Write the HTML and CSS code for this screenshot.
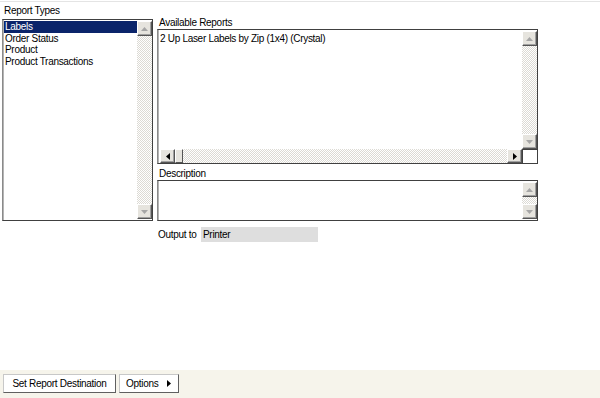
FILE: index.html
```html
<!DOCTYPE html>
<html>
<head>
<meta charset="utf-8">
<link rel="stylesheet" href="styles.css">
</head>
<body>
<div class="page">
  <div class="top-line"></div>
  <div class="main">
    <div class="left-col">
      <div class="label lbl-types">Report Types</div>
      <div class="box list-box">
        <div class="list-items">
          <div class="item selected">Labels</div>
          <div class="item">Order Status</div>
          <div class="item">Product</div>
          <div class="item">Product Transactions</div>
        </div>
        <div class="vscroll">
          <div class="sbtn"><svg width="7" height="4" viewBox="0 0 7 4"><path d="M3.5 0 L7 4 L0 4 Z" fill="#a6a6a6"/></svg></div>
          <div class="track"></div>
          <div class="sbtn"><svg width="7" height="4" viewBox="0 0 7 4"><path d="M0 0 L7 0 L3.5 4 Z" fill="#a6a6a6"/></svg></div>
        </div>
      </div>
    </div>
    <div class="right-col">
      <div class="label lbl-avail">Available Reports</div>
      <div class="box avail-box">
        <div class="avail-top">
          <div class="list-items avail-items">
            <div class="item">2 Up Laser Labels by Zip (1x4) (Crystal)</div>
          </div>
          <div class="vscroll">
            <div class="sbtn"><svg width="7" height="4" viewBox="0 0 7 4"><path d="M3.5 0 L7 4 L0 4 Z" fill="#a6a6a6"/></svg></div>
            <div class="track"></div>
            <div class="sbtn"><svg width="7" height="4" viewBox="0 0 7 4"><path d="M0 0 L7 0 L3.5 4 Z" fill="#a6a6a6"/></svg></div>
          </div>
        </div>
        <div class="hrow">
          <div class="hscroll">
            <div class="sbtn"><svg width="4" height="7" viewBox="0 0 4 7"><path d="M0 3.5 L4 0 L4 7 Z" fill="#000"/></svg></div>
            <div class="thumb"></div>
            <div class="track"></div>
            <div class="sbtn"><svg width="4" height="7" viewBox="0 0 4 7"><path d="M0 0 L4 3.5 L0 7 Z" fill="#000"/></svg></div>
          </div>
          <div class="corner"></div>
        </div>
      </div>
      <div class="label lbl-desc">Description</div>
      <div class="box desc-box">
        <div class="desc-text"></div>
        <div class="vscroll">
          <div class="sbtn"><svg width="7" height="4" viewBox="0 0 7 4"><path d="M3.5 0 L7 4 L0 4 Z" fill="#a6a6a6"/></svg></div>
          <div class="track"></div>
          <div class="sbtn"><svg width="7" height="4" viewBox="0 0 7 4"><path d="M0 0 L7 0 L3.5 4 Z" fill="#a6a6a6"/></svg></div>
        </div>
      </div>
      <div class="output-row">
        <span class="output-label">Output to</span>
        <span class="output-field">Printer</span>
      </div>
    </div>
  </div>
  <div class="bottom-bar">
    <button class="btn btn-dest">Set Report Destination</button>
    <button class="btn btn-opt">Options <svg width="4" height="7" viewBox="0 0 4 7"><path d="M0 0 L4 3.5 L0 7 Z" fill="#000"/></svg></button>
  </div>
</div>
</body>
</html>
```
FILE: styles.css
```css
* { box-sizing: border-box; }
html, body { margin: 0; padding: 0; background: #fff; }
body {
  font-family: "Liberation Sans", Arial, sans-serif;
  font-size: 10px;
  letter-spacing: -0.3px;
  color: #000;
}
.page {
  width: 600px;
  height: 398px;
  display: flex;
  flex-direction: column;
  overflow: hidden;
}
.top-line {
  margin-top: 1px;
  height: 2px;
  border-top: 1px solid #e4e4e4;
  flex: none;
}
.main {
  flex: 1;
  display: flex;
  padding-left: 2px;
}
.label { line-height: 12px; height: 12px; }
.left-col { width: 151px; display: flex; flex-direction: column; }
.lbl-types { padding-left: 2px; height: 15px; line-height: 13px; margin-top: 1px; }
.box {
  border: 1px solid #404040;
  border-left-color: #8a8a8a;
  box-shadow: inset 1px 0 0 #b4b4b4;
  background: #fff;
  display: flex;
}
.list-box { height: 202px; padding: 1px 0 1px 1px; }
.list-items { flex: 1; padding-top: 0; }
.item { line-height: 11.6px; height: 11.6px; padding-left: 1px; white-space: nowrap; }
.item.selected { background: #0a246a; color: #fff; }
.vscroll {
  width: 15px;
  display: flex;
  flex-direction: column;
  flex: none;
}
.sbtn {
  width: 15px;
  height: 15px;
  flex: none;
  background: #e6e4de;
  border-top: 1px solid #fff;
  border-left: 1px solid #fff;
  border-right: 1px solid #555;
  border-bottom: 1px solid #555;
  box-shadow: inset -1px -1px 0 #a0a0a0;
  display: flex;
  align-items: center;
  justify-content: center;
}
.track {
  flex: 1;
  background-color: #fff;
  background-image: repeating-conic-gradient(#dcdad4 0% 25%, #fff 0% 50%);
  background-size: 2px 2px;
}
.right-col {
  width: 381px;
  margin-left: 4px;
  display: flex;
  flex-direction: column;
  padding-top: 14px;
}
.lbl-avail { padding-left: 2px; }
.avail-box { height: 135px; flex-direction: column; padding: 1px 0 0 1px; }
.avail-top { flex: 1; display: flex; }
.avail-items { padding-top: 2px; }
.avail-items .item { padding-left: 1px; }
.hrow { display: flex; height: 14px; flex: none; }
.hscroll { flex: 1; display: flex; padding-left: 1px; }
.hscroll .sbtn { width: 15px; height: 14px; }
.hscroll .track { flex: 1; }
.thumb {
  width: 8px;
  background: #e6e4de;
  border-top: 1px solid #fff;
  border-left: 1px solid #fff;
  border-right: 1px solid #555;
  border-bottom: 1px solid #555;
}
.corner { width: 15px; background: #fff; border-left: 1px solid #404040; border-top: 1px solid #404040; }
.lbl-desc { padding-left: 2px; margin-top: 3px; height: 13px; line-height: 13px; }
.desc-box { height: 41px; padding: 1px 0 1px 1px; }
.desc-text { flex: 1; }
.output-row {
  margin-top: 6px;
  display: flex;
  align-items: center;
  height: 15px;
}
.output-label { padding-left: 1px; width: 44px; }
.output-field {
  width: 117px;
  height: 15px;
  background: #dedede;
  line-height: 15px;
  padding-left: 2px;
}
.bottom-bar {
  flex: none;
  height: 28px;
  background: #f6f4eb;
  display: flex;
  align-items: center;
  padding-left: 3px;
  gap: 3px;
  padding-bottom: 1px;
}
.btn {
  font-family: "Liberation Sans", Arial, sans-serif;
  font-size: 10px;
  letter-spacing: -0.3px;
  height: 19px;
  background: #fff;
  border: 1px solid #c8c8c8;
  border-right-color: #606060;
  border-bottom-color: #606060;
  padding: 0;
  margin: 0;
  color: #000;
  display: flex;
  align-items: center;
  justify-content: center;
}
.btn-dest { width: 113px; }
.btn-opt { width: 60px; justify-content: flex-start; padding-left: 6px; gap: 9px; }
```
